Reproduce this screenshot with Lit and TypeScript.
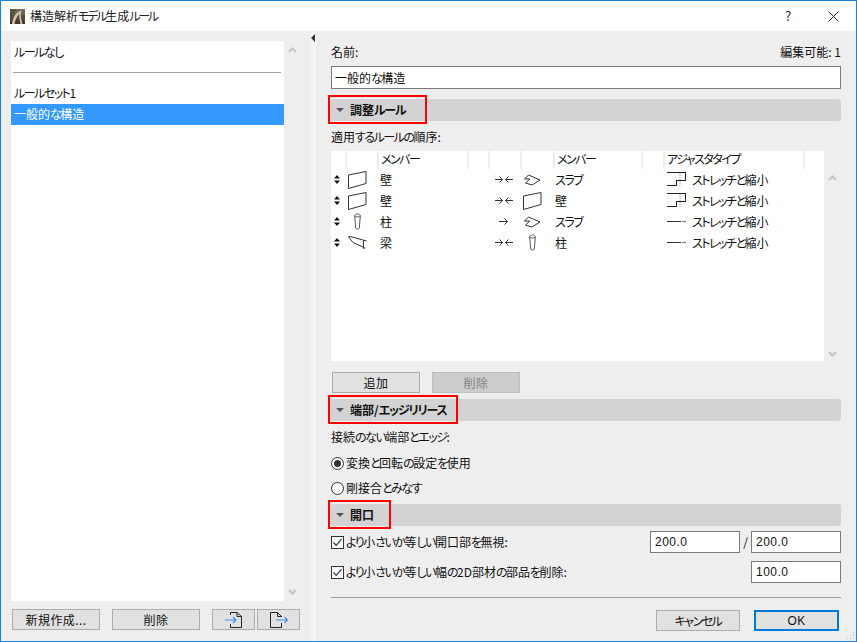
import { LitElement, html, css, svg } from "lit";
import { customElement } from "lit/decorators.js";

/* Kana are narrower than kanji in the reference's UI face: wrap them so they can be tightened. */
const jp = (text: string) =>
  text.split(/([\u3040-\u30ff]+)/).map((part, i) => (i % 2 ? html`<span class="k">${part}</span>` : part));

const stepper = html`<svg width="6" height="9" viewBox="0 0 6 9"><path d="M3 0 6 3.5H0Z M0 5.5H6L3 9Z" fill="#111"/></svg>`;
const wall = html`<svg width="19" height="18" viewBox="0 0 19 18"><path d="M.5 4 18 .5V12.5L.5 17.5Z" fill="#fff" stroke="#333"/></svg>`;
const slab = html`<svg width="17" height="12" viewBox="0 0 17 12"><path d="M.5 5 4.5 1 16 6 8 11 1.5 9 6 5Z" fill="none" stroke="#333"/></svg>`;
const column = html`<svg width="7" height="17" viewBox="0 0 7 17"><path d="M.7 3C.7 .2 6.3 .2 6.3 3L5.3 15C5 16.6 2 16.6 1.7 15Z M.7 3C.7 4.3 6.3 4.3 6.3 3" fill="#fff" stroke="#444" stroke-width=".9"/></svg>`;
const beam = html`<svg width="19" height="13" viewBox="0 0 19 13"><path d="M.5 .7H3L18.5 5 M.5 .7 5 6.5 16 11.5 M15.5 4.5V12.5 M15.5 12H17.5" fill="none" stroke="#333"/></svg>`;
const both = html`<svg width="18" height="9" viewBox="0 0 18 9"><path d="M0 4.5H7.5M4.5 1.5 7.5 4.5 4.5 7.5M18 4.5H10.5M13.5 1.5 10.5 4.5 13.5 7.5" fill="none" stroke="#333"/></svg>`;
const single = html`<svg width="18" height="9" viewBox="0 0 18 9"><path d="M4 4.5H12.5M9.5 1.5 12.5 4.5 9.5 7.5" fill="none" stroke="#333"/></svg>`;
const step = html`<svg width="19" height="15" viewBox="0 0 19 15"><path d="M13 1V15" stroke="#999" stroke-dasharray="1 1"/><path d="M0 .5H18.5V8.5H9.5V13.5H0" fill="none" stroke="#222" stroke-width="1.1"/></svg>`;
const dash = html`<svg width="19" height="15" viewBox="0 0 19 15"><path d="M0 7.5H14" stroke="#333"/><path d="M15 7.5H19" stroke="#777"/></svg>`;
const chevUp = html`<svg width="9" height="6" viewBox="0 0 9 6"><path d="M1 5 4.5 1.5 8 5" fill="none" stroke="#c4c4c4" stroke-width="2"/></svg>`;
const chevDown = html`<svg width="9" height="6" viewBox="0 0 9 6"><path d="M1 1 4.5 4.5 8 1" fill="none" stroke="#c4c4c4" stroke-width="2"/></svg>`;
const tri = html`<svg class="tri" width="8" height="4" viewBox="0 0 8 4"><path d="M0 0H8L4 4Z" fill="#555"/></svg>`;
const check = html`<svg class="cb" width="13" height="13" viewBox="0 0 13 13"><rect x=".5" y=".5" width="12" height="12" fill="#fff" stroke="#333"/><path d="M2.5 6.5 5.2 9.3 10.5 3.2" fill="none" stroke="#333" stroke-width="1.2"/></svg>`;
const radioOn = html`<svg class="rd" width="13" height="13" viewBox="0 0 13 13"><circle cx="6.5" cy="6.5" r="6" fill="#fff" stroke="#333"/><circle cx="6.5" cy="6.5" r="3.5" fill="#333"/></svg>`;
const radioOff = html`<svg class="rd" width="13" height="13" viewBox="0 0 13 13"><circle cx="6.5" cy="6.5" r="6" fill="#fff" stroke="#333"/></svg>`;
const importIcon = html`<svg width="18" height="16" viewBox="0 0 18 16"><path d="M5.5 3V.5H12L16.5 4.5V15.5H5.5V12" fill="none" stroke="#223"/><path d="M12 .5V4.5H16.5" fill="none" stroke="#223"/><path d="M0 8H11M8 5 11 8 8 11" fill="none" stroke="#3a8ef0" stroke-width="1.1"/></svg>`;
const exportIcon = html`<svg width="18" height="16" viewBox="0 0 18 16"><path d="M11.5 5V4.5L7.5.5H.5V15.5H11.5V11" fill="none" stroke="#223"/><path d="M7.5.5V4.5H11.5" fill="none" stroke="#223"/><path d="M6 8H17.5M14.5 5 17.5 8 14.5 11" fill="none" stroke="#3a8ef0" stroke-width="1.1"/></svg>`;
const logo = svg`<svg width="15" height="15" viewBox="0 0 15 15"><defs><linearGradient id="lg" x1="0" y1="0" x2="0" y2="1"><stop offset="0" stop-color="#7a705c"/><stop offset="1" stop-color="#3a3226"/></linearGradient></defs><rect width="15" height="15" fill="url(#lg)"/><path d="M2 15C3 8 6 3 11.5 1.5C10 6 11 11 12.5 15H10.5C9.5 11 9 7 9.5 4.5C7 7 5 11 4.5 15Z" fill="#cfc8b4"/><path d="M0 0H7L0 9Z" fill="#4a4335" opacity=".6"/></svg>`;

const rows = [
  { a: wall, an: "壁", arrow: both, b: slab, bn: "スラブ", t: step },
  { a: wall, an: "壁", arrow: both, b: wall, bn: "壁", t: step },
  { a: column, an: "柱", arrow: single, b: slab, bn: "スラブ", t: dash },
  { a: beam, an: "梁", arrow: both, b: column, bn: "柱", t: dash },
];

@customElement("app-root")
export class AppRoot extends LitElement {
  static styles = css`
    :host {
      display: block;
      width: 857px;
      height: 642px;
      font: 12px/16px "Noto Sans CJK JP", "Liberation Sans", sans-serif;
      font-feature-settings: "palt";
      color: #111;
    }
    * { box-sizing: border-box; }
    svg { display: block; flex: none; }
    .k { letter-spacing: -1.5px; }
    .window {
      height: 642px;
      border: 1px solid #1883d7;
      display: flex;
      flex-direction: column;
      position: relative;
    }
    .title {
      height: 30px;
      background: #fff;
      display: flex;
      align-items: center;
      padding: 0 0 0 9px;
      gap: 5px;
      color: #222;
      flex: none;
    }
    .title .name { flex: 1; }
    .title .k { letter-spacing: -2.2px; }
    .help { width: 12px; text-align: center; margin-right: 29px; font-size: 13px; }
    .close { margin-right: 17px; }
    .body { flex: 1; display: flex; background: #eeeeee; min-height: 0; }

    .left { width: 310px; padding: 10px 0 0 10px; flex: none; display: flex; flex-direction: column; }
    .list-wrap { display: flex; height: 560px; }
    .list { width: 273px; background: #fff; padding-top: 1px; }
    .item { height: 21px; line-height: 16px; padding: 2px 3px; }
    .item.sel { background: #3399ff; color: #fff; }
    .sep { height: 1px; background: #a0a0a0; margin: 9px 3px 10px 2px; }
    .scroll { width: 17px; flex: none; display: flex; flex-direction: column; justify-content: space-between; align-items: center; padding: 6px 0 6px; }
    .left-btns { display: flex; margin-top: 8px; padding-left: 1px; }
    .btn {
      height: 21px;
      background: #e1e1e1;
      border: 1px solid #adadad;
      display: flex;
      align-items: center;
      justify-content: center;
      font-size: 12px;
      letter-spacing: .4px;
      flex: none;
    }
    .w88 { width: 88px; }
    .w44 { width: 43px; }
    .ml12 { margin-left: 12px; }
    .ml2 { margin-left: 2px; }
    .btn.dis { background: #cccccc; border-color: #bfbfbf; color: #838383; }

    .split { width: 5px; flex: none; background: #f5f5f5; }
    .handle { width: 0; height: 0; margin-top: 3px; border: 3px solid transparent; border-left: 0; border-right: 4px solid #333; border-top-width: 4px; border-bottom-width: 4px; }

    .right { width: 510px; margin-left: 15px; flex: none; }
    .name-row { margin-top: 13px; display: flex; justify-content: space-between; height: 16px; }
    .input { height: 23px; background: #fff; border: 1px solid #7a7a7a; padding: 0 3px; display: flex; align-items: center; margin-top: 6px; }
    .section { height: 22px; background: #d3d3d3; border-radius: 3px; display: flex; align-items: center; padding-left: 6px; gap: 6px; font-weight: 700; position: relative; margin-left: -1px; }
    .section .k { letter-spacing: -1.2px; }
    .section .mark { position: absolute; top: -4px; left: -2px; height: 29px; border: 2px solid #f00; }
    .m1 { width: 99px; }
    .m2 { width: 130px; }
    .m3 { width: 63px; }
    .mt10 { margin-top: 10px; }
    .mt9 { margin-top: 9px; }
    .mt8 { margin-top: 8px; }
    .mt6 { margin-top: 6px; }
    .mt5 { margin-top: 5px; }
    .lbl { height: 16px; margin-top: 8px; }

    .table { height: 210px; display: flex; margin-top: 6px; }
    .tbody { width: 493px; background: #fff; }
    .grid { display: grid; grid-template-columns: 14px 32px 90px 21px 32px 33px 88px 22px 140px 21px; }
    .head { height: 18px; background: #fff; }
    .head div { border-left: 2px solid #eee; padding-left: 2px; line-height: 16px; white-space: nowrap; }
    .head div:first-child { border-left: 0; }
    .row { height: 21px; align-items: center; }
    .row > div { display: flex; align-items: center; white-space: nowrap; }
    .c { justify-content: center; }
    .step-c { padding-right: 2px; }
    .a-c { padding-right: 8px; }
    .b-c { padding-right: 9px; }
    .nm { padding-left: 3px; }
    .nm2 { padding-left: 2px; }
    .row .adj { padding-left: 4px; gap: 6px; grid-column: 9 / 11; }
    .tscroll { flex: 1; display: flex; flex-direction: column; justify-content: space-between; align-items: center; padding: 24px 0 4px; }

    .btns { display: flex; margin-top: 11px; padding-left: 1px; }
    .radio, .checkrow { display: flex; align-items: center; gap: 2px; }
    .opt-row { display: flex; align-items: center; height: 22px; }
    .opt-row .checkrow { flex: 1; }
    .num { width: 90px; height: 22px; background: #fff; border: 1px solid #7a7a7a; display: flex; align-items: center; padding: 0 3px 0 4px; font-family: "Liberation Sans", sans-serif; letter-spacing: .5px; }
    .slash { width: 11px; text-align: center; }
    hr { margin: 14px 0 0; border: 0; height: 1px; background: #a0a0a0; }
    .footer { display: flex; justify-content: flex-end; gap: 14px; margin-top: 12px; padding-right: 2px; }
    .w84 { width: 84px; }
    .w85 { width: 85px; }
    .ok { border: 2px solid #0078d7; font-family: "Liberation Sans", sans-serif; }
    .grip { position: absolute; right: 1px; bottom: 1px; }
  `;

  render() {
    return html`
      <div class="window">
        <div class="title">
          ${logo}
          <span class="name">${jp("構造解析モデル生成ルール")}</span>
          <span class="help">?</span>
          <svg class="close" width="11" height="11" viewBox="0 0 11 11"><path d="M.5.5 10.5 10.5M10.5.5 .5 10.5" stroke="#222" fill="none"/></svg>
        </div>
        <div class="body">
          <div class="left">
            <div class="list-wrap">
              <div class="list">
                <div class="item">${jp("ルールなし")}</div>
                <div class="sep"></div>
                <div class="item">${jp("ルールセット1")}</div>
                <div class="item sel">${jp("一般的な構造")}</div>
              </div>
              <div class="scroll">${chevUp}${chevDown}</div>
            </div>
            <div class="left-btns">
              <div class="btn w88">新規作成...</div>
              <div class="btn w88 ml12">削除</div>
              <div class="btn w44 ml12">${importIcon}</div>
              <div class="btn w44 ml2">${exportIcon}</div>
            </div>
          </div>
          <div class="split"><div class="handle"></div></div>
          <div class="right">
            <div class="name-row"><span>名前:</span><span>編集可能: 1</span></div>
            <div class="input">${jp("一般的な構造")}</div>
            <div class="section mt10">${tri}<span>${jp("調整ルール")}</span><div class="mark m1"></div></div>
            <div class="lbl">${jp("適用するルールの順序:")}</div>
            <div class="table">
              <div class="tbody">
                <div class="grid head">
                  <div></div><div></div><div>${jp("メンバー")}</div><div></div><div></div><div></div><div>${jp("メンバー")}</div><div></div><div>${jp("アジャスタタイプ")}</div><div></div>
                </div>
                ${rows.map(
                  (r) => html`<div class="grid row">
                    <div class="c step-c">${stepper}</div>
                    <div class="c a-c">${r.a}</div>
                    <div class="nm">${r.an}</div>
                    <div></div>
                    <div class="c">${r.arrow}</div>
                    <div class="c b-c">${r.b}</div>
                    <div class="nm2">${jp(r.bn)}</div>
                    <div></div>
                    <div class="adj">${r.t}<span>${jp("ストレッチと縮小")}</span></div>
                  </div>`
                )}
              </div>
              <div class="tscroll">${chevUp}${chevDown}</div>
            </div>
            <div class="btns">
              <div class="btn w88">追加</div>
              <div class="btn w88 ml12 dis">削除</div>
            </div>
            <div class="section mt6">${tri}<span>${jp("端部/エッジリリース")}</span><div class="mark m2"></div></div>
            <div class="lbl">${jp("接続のない端部とエッジ:")}</div>
            <div class="radio mt10">${radioOn}<span>${jp("変換と回転の設定を使用")}</span></div>
            <div class="radio mt9">${radioOff}<span>${jp("剛接合とみなす")}</span></div>
            <div class="section mt8">${tri}<span>${jp("開口")}</span><div class="mark m3"></div></div>
            <div class="opt-row mt5">
              <div class="checkrow">${check}<span>${jp("より小さいか等しい開口部を無視:")}</span></div>
              <div class="num">200.0</div><div class="slash">/</div><div class="num">200.0</div>
            </div>
            <div class="opt-row mt8">
              <div class="checkrow">${check}<span>${jp("より小さいか等しい幅の2D部材の部品を削除:")}</span></div>
              <div class="num">100.0</div>
            </div>
            <hr />
            <div class="footer">
              <div class="btn w84">${jp("キャンセル")}</div>
              <div class="btn w85 ok">OK</div>
            </div>
          </div>
        </div>
        <svg class="grip" width="9" height="9" viewBox="0 0 9 9"><path d="M7 1h1v1H7zM4 4h1v1H4zM7 4h1v1H7zM1 7h1v1H1zM4 7h1v1H4zM7 7h1v1H7z" fill="#bbb"/></svg>
      </div>
    `;
  }
}
